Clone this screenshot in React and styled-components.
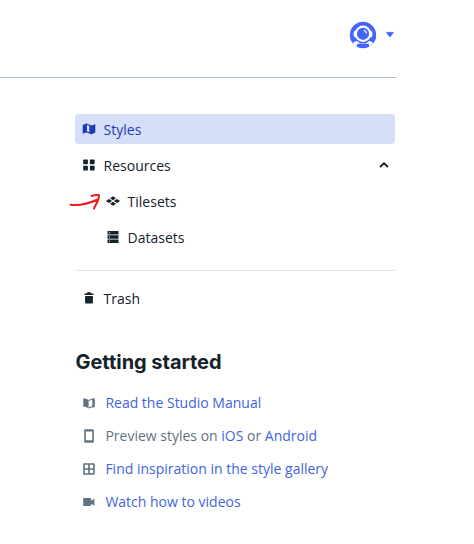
import React from "react";
import styled, { createGlobalStyle, css } from "styled-components";

const GlobalStyle = createGlobalStyle`
  * { box-sizing: border-box; }
  body { margin: 0; background: #fff; }
`;

const Page = styled.div`
  width: 474px;
  height: 544px;
  overflow: hidden;
  background: #fff;
  font: 14px/20px "Open Sans", "Noto Sans", sans-serif;
  color: #14222b;
`;

const Header = styled.header`
  width: 396px;
  height: 78px;
  padding: 21px 1px 0 0;
  display: flex;
  justify-content: flex-end;
  align-items: flex-start;
  border-bottom: 1px solid #a9bdd8;
`;

const AccountButton = styled.button`
  display: flex;
  align-items: center;
  gap: 8px;
  height: 28px;
  padding: 0;
  border: 0;
  background: none;
`;

const Icon = styled.svg`
  display: block;
  flex: none;
  overflow: visible;
`;

const Sidebar = styled.aside`
  width: 320px;
  margin: 36px 0 0 75px;
`;

const Nav = styled.nav`
  display: flex;
  flex-direction: column;
  gap: 6px;
`;

const NavItem = styled.a`
  position: relative;
  display: flex;
  align-items: center;
  height: 30px;
  padding: 0 5px 1px ${(p) => (p.$nested ? 30 : 6)}px;
  gap: 6.6px;
  border-radius: 4px;
  ${(p) =>
    p.$active &&
    css`
      background: #d5dff8;
      color: #1f3bb3;
    `}
`;

const Label = styled.span`
  flex: 1;
  padding-top: 2px;
`;

const Arrow = styled(Icon)`
  position: absolute;
  left: -6px;
  top: 4px;
`;

const Divider = styled.hr`
  width: 100%;
  height: 1px;
  margin: 12px 0 6px;
  border: 0;
  background: #dfe2e6;
`;

const Heading = styled.h2`
  margin: 35px 0 10px 0.5px;
  font: 650 20px/28px Inter, "Open Sans", sans-serif;
  letter-spacing: -0.03px;
  color: #14222b;
`;

const LinkList = styled.ul`
  margin: 0;
  padding: 0;
  list-style: none;
`;

const LinkRow = styled.li`
  display: flex;
  align-items: center;
  gap: 8.4px;
  height: 33px;
  padding-left: 6px;
  color: #607282;
`;

const Link = styled.a`
  color: #4264dc;
`;

const Avatar = () => (
  <Icon width="28" height="28" viewBox="0 0 28 28">
    <circle cx="14" cy="14" r="13.2" fill="#4264fb" />
    <rect x="4.6" y="9.5" width="18.8" height="7" rx="2.5" fill="#fff" />
    <circle cx="14" cy="12.800" r="8.200" fill="#fff" />
    <circle cx="14" cy="12.800" r="6.100" fill="#4264fb" />
    <path d="M15.200 9.400a3.800 3.800 0 0 1 2.200 2.500" stroke="#fff" strokeWidth="1.300" fill="none" strokeLinecap="round" />
    <path d="M4 22.500c.5-1.500 2-2.500 4-2.500l2.500 2h7l2.500-2c2 0 3.500 1 4 2.500l-3.500 3-1-3-2 .8v2.700h-7v-2.700l-2-.8-1 3z" fill="#fff" />
    <rect x="10" y="22.600" width="8" height="3.800" rx="1" fill="#4264fb" />
  </Icon>
);

const Caret = () => (
  <Icon width="10" height="6" viewBox="0 0 10 6">
    <path d="M1.200.3h7.600L5 5.200z" fill="#4264fb" stroke="#4264fb" strokeWidth=".5" strokeLinejoin="round" />
  </Icon>
);

const GLYPHS = {
  map: (
    <>
      <path d="M1.700 4L5.500 2.500v8.700L1.700 12.700z" />
      <path d="M5.300 3l4.900 1.900v7.500L5.300 10.800z" fill="none" stroke="currentColor" strokeWidth="1.100" />
      <path d="M8.300 3.900l2.500.9v8.400l-2.500-.9zM10.600 4.700l3.700-1.700v8.600l-3.700 1.700z" />
    </>
  ),
  grid: (
    <>
      <rect x="2.200" y="2.600" width="4.700" height="4.700" rx=".7" />
      <rect x="8.900" y="2.600" width="4.700" height="4.700" rx=".7" />
      <rect x="2.200" y="8.800" width="4.700" height="4.700" rx=".7" />
      <rect x="8.900" y="8.800" width="4.700" height="4.700" rx=".7" />
    </>
  ),
  tiles: (
    <path d="M8 3.300l3 2-3 2-3-2zM4 6l3.100 2L4 10 .9 8zM12 6l3.100 2-3.100 2-3.100-2zM8 8.700l3 2-3 2-3-2z" />
  ),
  data: (
    <>
      <path d="M2.500 2h11v3.500h-11zM2.500 6.200h11v3.600h-11zM2.500 10.500h11V14h-11z" />
      <path d="M4 3.200h1v1H4zM4 7.500h1v1H4zM4 11.800h1v1H4z" fill="#fff" />
    </>
  ),
  trash: (
    <path d="M6.300 2.300h3.400l.5 1.100h2.300v1.500H3.500V3.400h2.300zM4.100 5.900h7.800v6.600q0 .9-.9.900H5q-.9 0-.9-.9z" />
  ),
  book: (
    <>
      <path d="M2.300 3.400c2.300 0 4 .6 5.300 1.700v8.400C6.300 12.300 4.600 11.800 2.300 11.800z" />
      <path d="M8 5.500c1.200-1.100 2.800-1.500 5-1.500v7.600c-2 0-3.700.4-5 1.400" fill="none" stroke="currentColor" strokeWidth="1.200" />
      <path d="M11.300 3.500h2.200v8.600h-2.200z" />
    </>
  ),
  phone: (
    <path fillRule="evenodd" d="M4.200 1.200h7.600q1 0 1 1v11.600q0 1-1 1H4.200q-1 0-1-1V2.200q0-1 1-1zM4.800 3.400v8.900h6.400V3.400z" />
  ),
  gallery: (
    <path d="M3 3h10v10H3zM8 3v10M3 8h10" fill="none" stroke="currentColor" strokeWidth="1.600" strokeLinejoin="round" />
  ),
  video: <path d="M3.200 4h5.900q1 0 1 1v1.700l3.300-2v7l-3.300-2V11q0 1-1 1H3.200q-1 0-1-1V5q0-1 1-1z" />,
};

const Glyph = ({ name }) => (
  <Icon width="16" height="16" viewBox="0 0 16 16" fill="currentColor">
    {GLYPHS[name]}
  </Icon>
);

const Chevron = () => (
  <Icon width="12" height="8" viewBox="0 0 12 8">
    <path d="M2 6l4-3.800L10 6" fill="none" stroke="#14222b" strokeWidth="1.900" />
  </Icon>
);

export default function App() {
  return (
    <Page>
      <GlobalStyle />
      <Header>
        <AccountButton aria-label="Account">
          <Avatar />
          <Caret />
        </AccountButton>
      </Header>
      <Sidebar>
        <Nav>
          <NavItem $active>
            <Glyph name="map" />
            <Label>Styles</Label>
          </NavItem>
          <NavItem>
            <Glyph name="grid" />
            <Label>Resources</Label>
            <Chevron />
          </NavItem>
          <NavItem $nested>
            <Arrow width="34" height="22" viewBox="0 0 34 22" fill="none" stroke="#f41a1a" strokeWidth="2" strokeLinecap="round" strokeLinejoin="round">
              <path d="M1.500 14.800c8 1 17-.6 27-5.300M22.500 6c2.500-.8 5-1.200 7.500-.7.500 3.700-2.700 8-5 13.200" />
            </Arrow>
            <Glyph name="tiles" />
            <Label>Tilesets</Label>
          </NavItem>
          <NavItem $nested>
            <Glyph name="data" />
            <Label>Datasets</Label>
          </NavItem>
          <Divider />
          <NavItem>
            <Glyph name="trash" />
            <Label>Trash</Label>
          </NavItem>
        </Nav>
        <Heading>Getting started</Heading>
        <LinkList>
          <LinkRow>
            <Glyph name="book" />
            <Link>Read the Studio Manual</Link>
          </LinkRow>
          <LinkRow>
            <Glyph name="phone" />
            <span>
              Preview styles on <Link>iOS</Link> or <Link>Android</Link>
            </span>
          </LinkRow>
          <LinkRow>
            <Glyph name="gallery" />
            <Link>Find inspiration in the style gallery</Link>
          </LinkRow>
          <LinkRow>
            <Glyph name="video" />
            <Link>Watch how to videos</Link>
          </LinkRow>
        </LinkList>
      </Sidebar>
    </Page>
  );
}
